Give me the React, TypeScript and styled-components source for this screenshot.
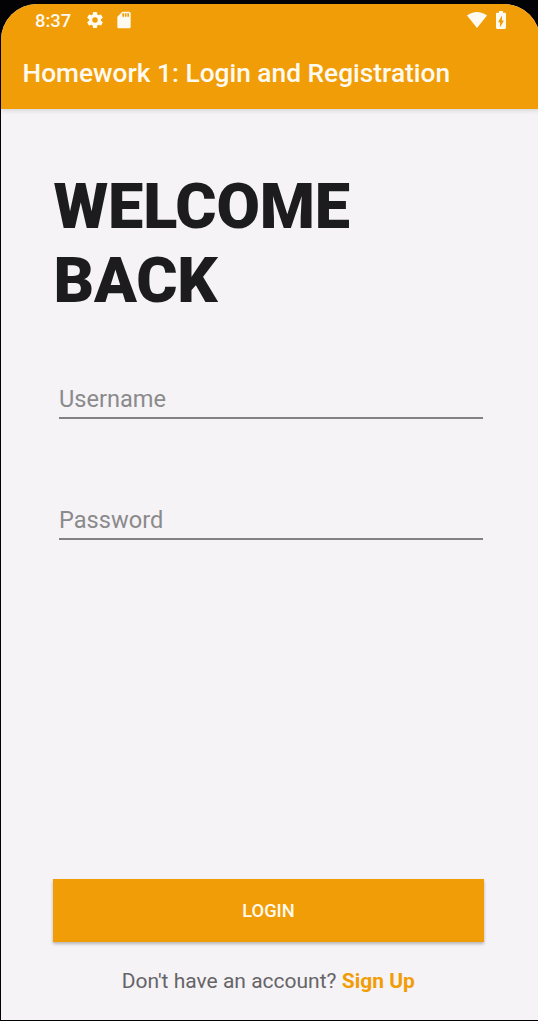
import React from "react";
import styled, { createGlobalStyle } from "styled-components";

const ORANGE = "#f19d07";

const GlobalStyle = createGlobalStyle`
  * { box-sizing: border-box; }
  body { margin: 0; background: #030305; font-family: Roboto, "Liberation Sans", sans-serif; overflow: hidden; }
`;

const Device = styled.div`
  width: 538px;
  height: 1021px;
  padding: 4px 0 1px 1px;
  background: #030305;
  overflow: hidden;
`;

const Screen = styled.main`
  display: flex;
  flex-direction: column;
  width: 539px;
  height: 1016px;
  border-radius: 36px 36px 0 0;
  overflow: hidden;
  background: #f5f3f6;
`;

const Header = styled.header`
  flex: none;
  height: 105px;
  background: ${ORANGE};
  color: #fffaf0;
  box-shadow: 0 1px 5px rgba(0, 0, 0, 0.16);
`;

const StatusBar = styled.div`
  display: flex;
  align-items: center;
  justify-content: space-between;
  height: 32px;
  padding: 0 34px 0 34px;
`;

const StatusGroup = styled.div<{ $gap: number }>`
  display: flex;
  align-items: center;
  gap: ${({ $gap }) => $gap}px;
`;

const Clock = styled.span`
  width: 37px;
  margin-right: 4px;
  font-size: 18.4px;
  font-weight: 500;
  line-height: 22px;
  white-space: nowrap;
  padding-top: 1px;
`;

const Glyph = styled.svg`
  display: block;
  flex: none;
  fill: currentColor;
`;

const AppTitle = styled.h1`
  margin: 0;
  padding: 22px 0 0 21.5px;
  font-size: 26.3px;
  font-weight: 500;
  line-height: 31px;
  white-space: nowrap;
`;

const Content = styled.section`
  flex: 1;
  display: flex;
  flex-direction: column;
  padding: 61px 54px 0 52px;
`;

const Heading = styled.h2`
  margin: 0;
  padding-left: 0.5px;
  color: #1c1b1d;
  font-size: 63px;
  font-weight: 900;
  letter-spacing: -0.15px;
  line-height: 74px;
`;

const Field = styled.input<{ $top: number }>`
  width: 424px;
  height: 41px;
  margin: ${({ $top }) => $top}px 0 0 6px;
  padding: 3px 0 0;
  border: 0;
  border-bottom: 2px solid #828283;
  border-radius: 0;
  outline: 0;
  background: transparent;
  color: #1c1b1d;
  font: 400 23.6px Roboto, sans-serif;

  &::placeholder {
    color: #8b8a8c;
    opacity: 1;
  }
`;

const LoginButton = styled.button`
  width: 431px;
  height: 62.5px;
  margin: auto 0 0;
  padding: 1px 0 0;
  border: 0;
  background: ${ORANGE};
  color: #fffaf0;
  font: 500 18.3px Roboto, sans-serif;
  box-shadow: 0 2px 3px rgba(0, 0, 0, 0.26);
`;

const Prompt = styled.p`
  margin: 26.5px 2.5px 26px 0;
  color: #656467;
  font-size: 21px;
  line-height: 26px;
  text-align: center;
  white-space: nowrap;
`;

const SignUp = styled.a`
  color: ${ORANGE};
  font-weight: 700;
`;

export default function App() {
  return (
    <>
      <GlobalStyle />
      <Device>
        <Screen>
          <Header>
            <StatusBar>
              <StatusGroup $gap={9}>
                <Clock>8:37</Clock>
                <Glyph width="20" height="20" viewBox="0 0 24 24">
                  <path d="M19.14 12.94c.04-.3.06-.61.06-.94s-.02-.64-.07-.94l2.03-1.58a.49.49 0 0 0 .12-.61l-1.92-3.32a.49.49 0 0 0-.59-.22l-2.39.96a7 7 0 0 0-1.62-.94l-.36-2.54a.48.48 0 0 0-.48-.41h-3.84a.47.47 0 0 0-.47.41l-.36 2.54a7.4 7.4 0 0 0-1.62.94l-2.39-.96a.48.48 0 0 0-.59.22L2.74 8.87a.47.47 0 0 0 .12.61l2.03 1.58a6.7 6.7 0 0 0 0 1.88l-2.03 1.58a.49.49 0 0 0-.12.61l1.92 3.32c.12.22.37.29.59.22l2.39-.96c.5.38 1.03.7 1.62.94l.36 2.54c.05.24.24.41.48.41h3.84c.24 0 .44-.17.47-.41l.36-2.54a7.3 7.3 0 0 0 1.62-.94l2.39.96c.22.08.47 0 .59-.22l1.92-3.32a.47.47 0 0 0-.12-.61zM12 15.3a3.3 3.3 0 1 1 0-6.6 3.3 3.3 0 0 1 0 6.6z" />
                </Glyph>
                <Glyph width="20" height="20" viewBox="0 0 24 24">
                  <path d="M18 2h-8L4.02 8 4 20c0 1.1.9 2 2 2h12c1.1 0 2-.9 2-2V4c0-1.1-.9-2-2-2zm-6 6h-2V4h2v4zm3 0h-2V4h2v4zm3 0h-2V4h2v4z" />
                </Glyph>
              </StatusGroup>
              <StatusGroup $gap={9}>
                <Glyph width="20" height="16" viewBox="0 0 20 16">
                  <path d="M0 3.6C5.7-1.1 14.3-1.1 20 3.6L10 16z" />
                </Glyph>
                <Glyph width="10" height="18" viewBox="7 2 10 20" preserveAspectRatio="none">
                  <path d="M15.67 4H14V2h-4v2H8.33C7.6 4 7 4.6 7 5.33v15.33C7 21.4 7.6 22 8.33 22h7.33c.74 0 1.34-.6 1.34-1.33V5.33C17 4.6 16.4 4 15.67 4zM11 20v-5.5H9L13 7v5.5h2L11 20z" />
                </Glyph>
              </StatusGroup>
            </StatusBar>
            <AppTitle>Homework 1: Login and Registration</AppTitle>
          </Header>
          <Content>
            <Heading>
              WELCOME
              <br />
              BACK
            </Heading>
            <Field $top={60} type="text" placeholder="Username" />
            <Field $top={80} type="password" placeholder="Password" />
            <LoginButton type="button">LOGIN</LoginButton>
            <Prompt>
              Don't have an account? <SignUp>Sign Up</SignUp>
            </Prompt>
          </Content>
        </Screen>
      </Device>
    </>
  );
}
